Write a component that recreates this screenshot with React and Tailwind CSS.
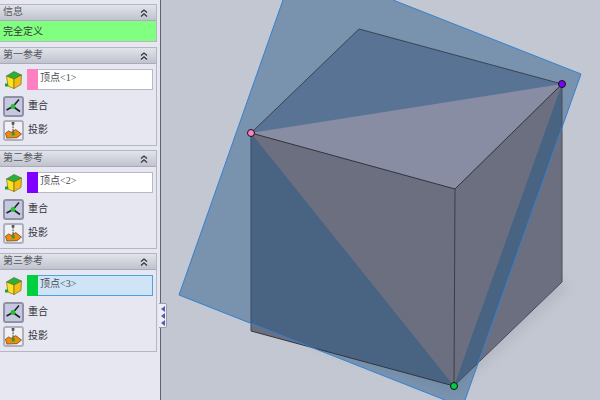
const font = { fontFamily: '"Noto Sans CJK SC", "Liberation Sans", sans-serif' };

function Chevrons() {
  return (
    <svg width="8" height="8" viewBox="0 0 8 8" fill="none" stroke="#33353f" strokeWidth="1.3">
      <path d="M1 3.6 L4 1 L7 3.6" />
      <path d="M1 7.4 L4 4.8 L7 7.4" />
    </svg>
  );
}

function Header({ title }) {
  return (
    <div className="h-[16px] flex items-center justify-between pl-[3px] pr-[8px] border-b border-[#a9abb9] bg-gradient-to-b from-[#e2e4ea] to-[#c0c3ce]">
      <span className="text-[10px] leading-none text-[#55575f] pb-[3px]">{title}</span>
      <Chevrons />
    </div>
  );
}

function CubeIcon() {
  return (
    <svg width="18" height="18" viewBox="0 0 18 18">
      <path d="M1.5 5 L9 0.5 L16.5 4 L9 8 Z" fill="#2fae3a" stroke="#1f7a28" strokeWidth="0.6" />
      <path d="M1.5 5 L9 8 L9 17.5 L3 15 Z" fill="#ffe21f" stroke="#6a5a18" strokeWidth="0.6" />
      <path d="M9 8 L16.5 4 L16 13.5 L9 17.5 Z" fill="#f0bd14" stroke="#6a5a18" strokeWidth="0.6" />
      <rect x="0" y="12.5" width="3" height="3" fill="#1e9e36" />
    </svg>
  );
}

function CoincidentIcon() {
  return (
    <div className="w-[21px] h-[21px] rounded-[3px] border-2 border-[#8f91a6] bg-[#c6c7e0] flex items-center justify-center">
      <svg width="17" height="17" viewBox="0 0 17 17" fill="none">
        <path d="M14 1.5 L8 8.5 L15 13.5" stroke="#1d2420" strokeWidth="1.6" />
        <path d="M8 8.5 L1.5 12" stroke="#1d2420" strokeWidth="1.6" />
        <circle cx="8" cy="8.5" r="2.4" fill="#1fc42c" />
      </svg>
    </div>
  );
}

function ProjectIcon() {
  return (
    <div className="w-[21px] h-[21px] rounded-[3px] border-2 border-[#b0b1be] bg-[#f0f0f5] flex items-center justify-center">
      <svg width="19" height="19" viewBox="0 0 19 19" fill="none">
        <path d="M0.5 12.5 L4 10 L7 11.5 L12 8.5 L18.5 13.5 L13.5 17.5 L2 18 Z" fill="#ee8c10" stroke="#4d3208" strokeWidth="0.7" />
        <path d="M9 2 L9 14" stroke="#222" strokeWidth="1" strokeDasharray="2 1" />
        <rect x="7.5" y="0" width="3" height="3" fill="#555" />
        <rect x="7.5" y="12" width="3.5" height="3" fill="#22a33a" />
      </svg>
    </div>
  );
}

function Reference({ title, color, label, active }) {
  return (
    <section className="border border-l-0 border-[#b4b6c4] bg-[#e6e7f0]">
      <Header title={title} />
      <div className="h-[80.5px] pl-[3px] pr-[3px]">
        <div className="flex items-center gap-[4px] pt-[5px] pl-[2px]">
          <CubeIcon />
          <div className={`flex h-[21px] w-[126px] border ${active ? "border-[#4ea3dc] bg-[#cfe4f7]" : "border-[#b6b8c6] bg-white"}`}>
            <div className="w-[11px] -my-px -ml-px" style={{ backgroundColor: color }} />
            <span className="pl-[2px] text-[10px] leading-[15px] text-[#4a4a52] font-['Liberation_Serif','Noto_Sans_CJK_SC',serif]">{label}</span>
          </div>
        </div>
        <div className="flex items-center gap-[4px] mt-[6px]">
          <CoincidentIcon />
          <span className="text-[10px] leading-none text-[#33343c] pb-[3px]">重合</span>
        </div>
        <div className="flex items-center gap-[4px] mt-[3px]">
          <ProjectIcon />
          <span className="text-[10px] leading-none text-[#33343c] pb-[3px]">投影</span>
        </div>
      </div>
    </section>
  );
}

function Scene() {
  return (
    <svg className="w-full h-full" viewBox="161 0 439 400">
      <defs>
        <filter id="blur"><feGaussianBlur stdDeviation="6" /></filter>
      </defs>
      <path d="M454 392 L570 286 L540 270 L300 340 Z" fill="#a9adb8" opacity="0.55" filter="url(#blur)" />
      <path d="M251 133 L359 29 L562 84 L455 189 Z" fill="#898da3" />
      <path d="M251 133 L455 189 L454 386 L251 331 Z" fill="#6c6f80" />
      <path d="M455 189 L562 84 L562 282 L454 386 Z" fill="#6c6f80" />
      <path d="M283 0 L393 0 L581 74 L465 400 L445 400 L179 295 Z" fill="#205586" fillOpacity="0.45" />
      <path d="M251 133 L562 84 L455 189 Z" fill="#898da3" />
      <path d="M251 133 L455 189 L454 386 Z" fill="#6c6f80" />
      <path d="M455 189 L562 84 L454 386 Z" fill="#6c6f80" />
      <g fill="none" stroke="#33353c" strokeWidth="1">
        <path d="M251 133 L359 29 L562 84" stroke="#3a4350" />
        <path d="M251 133 L455 189 L562 84" />
        <path d="M455 189 L454 386" stroke="#3c3e48" />
        <path d="M562 84 L562 282 L454 386" stroke="#4a4c55" />
        <path d="M251 133 L251 331" stroke="#3a4a5f" />
        <path d="M251 331 L454 386" />
      </g>
      <path d="M283 0 L179 295 L445 400 M465 400 L581 74 L393 0" fill="none" stroke="#3380d0" strokeWidth="1" />
      <circle cx="251" cy="133" r="3.5" fill="#ff80c0" stroke="#111" />
      <circle cx="562" cy="84" r="3.5" fill="#8000ff" stroke="#111" />
      <circle cx="454" cy="386" r="3.5" fill="#00d040" stroke="#111" />
    </svg>
  );
}

function Grip() {
  return <span className="w-0 h-0 border-y-[3px] border-y-transparent border-r-[4px] border-r-[#5a58b0]" />;
}

export default function App() {
  return (
    <div className="w-[600px] h-[400px] flex overflow-hidden bg-[#c3c7d2]" style={font}>
      <aside className="w-[157px] shrink-0 bg-[#e6e7f0] pt-[4px] flex flex-col">
        <section className="border border-l-0 border-[#b4b6c4]">
          <Header title="信息" />
          <div className="h-[20px] bg-[#80ff80] pl-[3px] text-[10px] leading-[19px] text-[#333]">完全定义</div>
        </section>
        <div className="h-[5px] shrink-0" />
        <Reference title="第一参考" color="#ff80c0" label="顶点<1>" />
        <div className="h-[4.5px] shrink-0" />
        <Reference title="第二参考" color="#8000ff" label="顶点<2>" />
        <div className="h-[4.5px] shrink-0" />
        <Reference title="第三参考" color="#00d040" label="顶点<3>" active />
      </aside>
      <div className="w-[3px] shrink-0 bg-[#e6e7f0]" />
      <div className="w-px shrink-0 bg-[#5f6273]" />
      <main className="relative flex-1 min-w-0">
        <Scene />
        <div className="absolute left-[-2px] top-[303px] w-[8px] h-[25px] rounded-r-[2px] bg-[#eeeef6] border border-l-0 border-[#9a9cac] flex flex-col items-center justify-around py-px">
          <Grip />
          <Grip />
          <Grip />
        </div>
      </main>
    </div>
  );
}
